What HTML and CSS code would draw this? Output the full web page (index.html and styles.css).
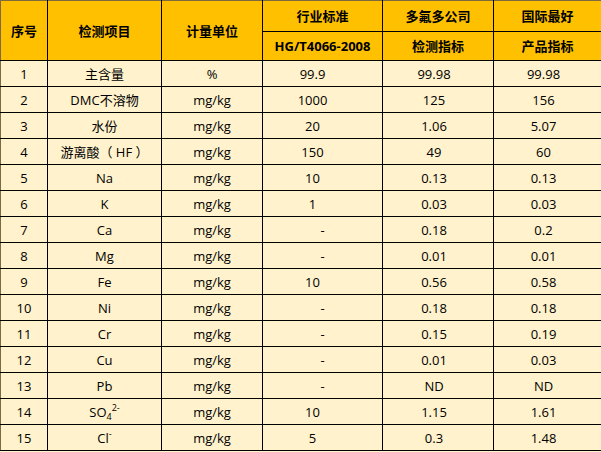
FILE: index.html
```html
<!DOCTYPE html>
<html lang="zh-CN">
<head>
<meta charset="utf-8">
<title>检测指标对比</title>
<link rel="stylesheet" href="styles.css">
</head>
<body>
<table class="spec">
  <colgroup>
    <col class="c1"><col class="c2"><col class="c3"><col class="c4"><col class="c5"><col class="c6">
  </colgroup>
  <thead>
    <tr class="h1">
      <th rowspan="2">序号</th>
      <th rowspan="2">检测项目</th>
      <th rowspan="2">计量单位</th>
      <th>行业标准</th>
      <th>多氟多公司</th>
      <th>国际最好</th>
    </tr>
    <tr class="h2">
      <th>HG/T4066-2008</th>
      <th>检测指标</th>
      <th>产品指标</th>
    </tr>
  </thead>
  <tbody>
    <tr><td>1</td><td>主含量</td><td>%</td><td class="sh">99.9</td><td class="nm">99.98</td><td class="nm">99.98</td></tr>
    <tr><td>2</td><td>DMC不溶物</td><td>mg/kg</td><td class="sh">1000</td><td class="nm">125</td><td class="nm">156</td></tr>
    <tr><td>3</td><td>水份</td><td>mg/kg</td><td class="sh">20</td><td class="nm">1.06</td><td class="nm">5.07</td></tr>
    <tr><td>4</td><td>游离酸（ HF ）</td><td>mg/kg</td><td class="sh">150</td><td class="nm">49</td><td class="nm">60</td></tr>
    <tr><td>5</td><td>Na</td><td>mg/kg</td><td class="sh">10</td><td class="nm">0.13</td><td class="nm">0.13</td></tr>
    <tr><td>6</td><td>K</td><td>mg/kg</td><td class="sh">1</td><td class="nm">0.03</td><td class="nm">0.03</td></tr>
    <tr><td>7</td><td>Ca</td><td>mg/kg</td><td>-</td><td class="nm">0.18</td><td class="nm">0.2</td></tr>
    <tr><td>8</td><td>Mg</td><td>mg/kg</td><td>-</td><td class="nm">0.01</td><td class="nm">0.01</td></tr>
    <tr><td>9</td><td>Fe</td><td>mg/kg</td><td class="sh">10</td><td class="nm">0.56</td><td class="nm">0.58</td></tr>
    <tr><td>10</td><td>Ni</td><td>mg/kg</td><td>-</td><td class="nm">0.18</td><td class="nm">0.18</td></tr>
    <tr><td>11</td><td>Cr</td><td>mg/kg</td><td>-</td><td class="nm">0.15</td><td class="nm">0.19</td></tr>
    <tr><td>12</td><td>Cu</td><td>mg/kg</td><td>-</td><td class="nm">0.01</td><td class="nm">0.03</td></tr>
    <tr><td>13</td><td>Pb</td><td>mg/kg</td><td>-</td><td class="nm">ND</td><td class="nm">ND</td></tr>
    <tr><td>14</td><td>SO<sub>4</sub><sup>2-</sup></td><td>mg/kg</td><td class="sh">10</td><td class="nm">1.15</td><td class="nm">1.61</td></tr>
    <tr><td>15</td><td>Cl<sup>-</sup></td><td>mg/kg</td><td class="sh">5</td><td class="nm">0.3</td><td class="nm">1.48</td></tr>
  </tbody>
</table>
</body>
</html>
```
FILE: styles.css
```css
html, body {
  margin: 0;
  padding: 0;
  background: #fff2cc;
}
.spec {
  border-collapse: collapse;
  table-layout: fixed;
  width: 601px;
  font-family: "Open Sans", "Noto Sans CJK SC", sans-serif;
  font-size: 13px;
  color: #000;
  border: 1px solid #7d6b3f;
}
.c1 { width: 47px; }
.c2 { width: 114px; }
.c3 { width: 101px; }
.c4 { width: 120px; }
.c5 { width: 111px; }
.c6 { width: 108px; }
.spec th, .spec td {
  border: 1px solid #000;
  padding: 0;
  text-align: center;
  vertical-align: middle;
  line-height: 16px;
  white-space: nowrap;
}
.spec th {
  background: #ffc000;
  font-family: "Noto Sans CJK SC", "Open Sans", sans-serif;
  font-weight: bold;
  font-size: 13px;
}
.spec .h2 th:first-child {
  font-family: "Open Sans", "Noto Sans CJK SC", sans-serif;
}
.h1 th { height: 30px; }
.h2 th { height: 28px; }
.spec td {
  background: #fff2cc;
  height: 25px;
}
.spec tr > :first-child { border-left-color: #7d6b3f; }
.spec tr > :last-child { border-right-color: #7d6b3f; }
.h1 th { border-top-color: #7d6b3f; }
.spec td.sh { padding-right: 20px; }
.spec td.nm { padding-right: 8px; }
sub, sup {
  font-size: 9px;
  line-height: 0;
}
sub { vertical-align: -3px; }
sup { vertical-align: 6px; }
```
